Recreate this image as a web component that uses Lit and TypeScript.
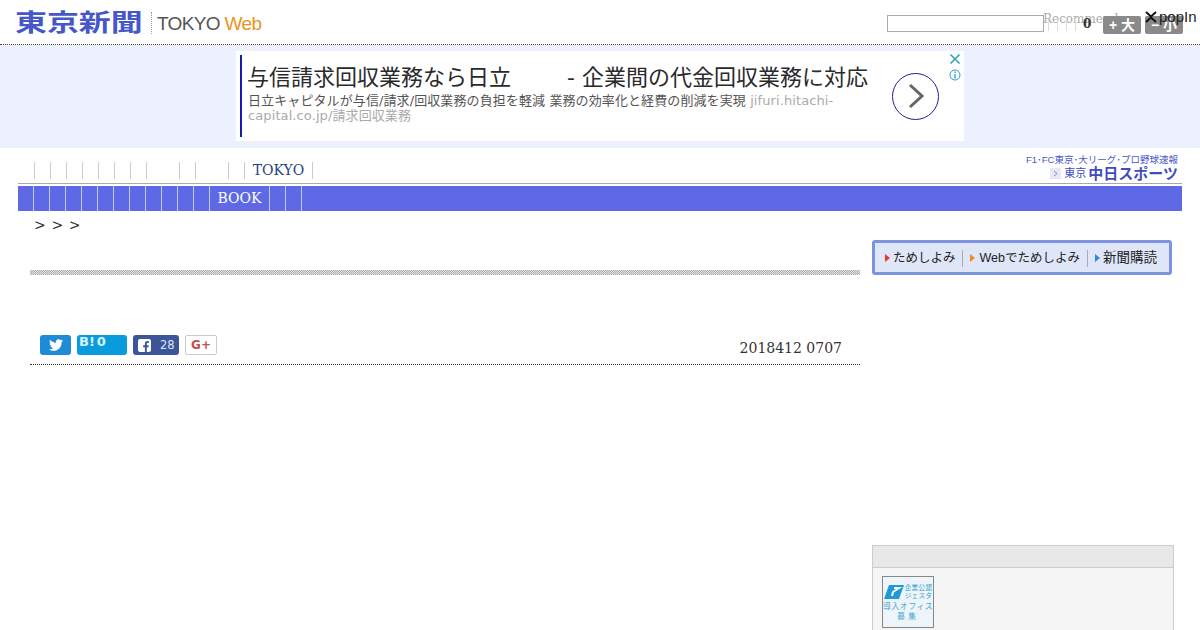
import { LitElement, html, css } from "lit";
import { customElement } from "lit/decorators.js";

@customElement("app-root")
export class AppRoot extends LitElement {
  static styles = css`
    :host { display: block; width: 1200px; height: 630px; overflow: hidden; background: #fff; position: relative; font-family: "DejaVu Serif", "Noto Sans CJK JP", serif; color: #333; }
    * { box-sizing: border-box; }
    .head { height: 45px; border-bottom: 1px dotted #444; display: flex; align-items: flex-start; position: relative; }
    .logo { display: flex; align-items: center; height: 36px; margin: 5px 0 0 15px; font-family: "Liberation Sans", "Noto Sans CJK JP", sans-serif; }
    .logo b { display: block; font-size: 24px; color: #4658c8; line-height: 36px; font-weight: 700; width: 128px; white-space: nowrap; transform: scaleX(1.33); transform-origin: left center; }
    .logo i { display: block; height: 22px; border-left: 1px dotted #99a; margin: 0 5px 0 8px; }
    .logo span { font-size: 19px; letter-spacing: -0.65px; color: #555; margin-top: 1px; }
    .logo em { font-style: normal; color: #e8931c; }
    .search { position: absolute; left: 887px; top: 15px; width: 157px; height: 17px; border: 1px solid #aaa; background: #fff; }
    .rec { position: absolute; left: 1043px; top: 12px; font-size: 12px; color: #aaa; white-space: nowrap; }
    .ticks { position: absolute; left: 1048px; top: 19px; display: flex; gap: 8px; }
    .ticks u { display: block; width: 1px; height: 12px; background: #ddd; }
    .zero { position: absolute; left: 1083px; top: 17px; font-size: 12px; font-weight: 700; color: #333; }
    .size { position: absolute; top: 16px; height: 18px; background: #8a8a8a; color: #fff; border-radius: 2px; font: 700 14px/18px "Liberation Sans", "Noto Sans CJK JP", sans-serif; text-align: center; white-space: nowrap; }
    .big { left: 1103px; width: 38px; }
    .small { left: 1145px; width: 38px; }
    .popln { position: absolute; left: 1144px; top: 8px; display: flex; align-items: center; gap: 1px; font: 15px/17px "Liberation Sans", sans-serif; color: #222; }
    .popln svg { display: block; }

    .band { height: 103px; background: #ecf1fd; padding-top: 6px; display: flex; justify-content: center; }
    .ad { width: 728px; height: 90px; background: #fff; padding: 4px 0 0 4px; display: flex; position: relative; font-family: "DejaVu Sans", "Noto Sans CJK JP", sans-serif; }
    .adbar { width: 2px; height: 82px; background: #1a1ab0; flex: none; }
    .adtext { margin-left: 6px; width: 640px; }
    .adtitle { font-size: 22px; line-height: 26px; margin: 10px 0 0 -1px; color: #2a2a2a; white-space: pre; }
    .addesc { font-size: 13px; line-height: 15px; letter-spacing: 0.1px; color: #555; margin-top: 2px; width: 610px; }
    .addesc span { color: #aaa; }
    .go { position: absolute; left: 656px; top: 22px; }
    .adx { position: absolute; right: 3px; top: 2px; }
    .adi { position: absolute; right: 3px; top: 18px; }

    .nav { height: 36px; margin: 0 18px; border-bottom: 1px solid #aaa; display: flex; align-items: flex-start; padding: 14px 4px 0 16px; }
    .nav a { display: block; height: 17px; border-left: 1px solid #ccc; font-size: 14px; line-height: 16px; color: #1f3f80; text-align: center; }
    .nav a:last-of-type { border-right: 1px solid #ccc; }
    .logo2 { margin-left: auto; margin-top: -9px; text-align: right; font-family: "Liberation Sans", "Noto Sans CJK JP", sans-serif; }
    .logo2 small { display: block; font-size: 9.5px; line-height: 13px; color: #4a57c4; white-space: nowrap; }
    .logo2 b { display: flex; justify-content: flex-end; align-items: center; gap: 2px; font-size: 15px; line-height: 15px; color: #3f4cc0; white-space: nowrap; }
    .logo2 b span { font-size: 11px; font-weight: 400; }
    .logo2 b svg { background: #e4e8f8; margin-right: 1px; }

    .menu { height: 25px; margin: 1px 18px 0; background: #5f69e6; padding-left: 15px; display: flex; margin-top: 2px; }
    .menu a { display: block; height: 25px; border-left: 1px solid #c5c9f2; font-size: 14px; line-height: 24px; color: #fff; text-align: center; }

    .crumbs { height: 28px; padding-left: 34px; display: flex; gap: 5.7px; font-size: 14px; line-height: 28px; color: #333; }
    .main { display: grid; grid-template-columns: 830px 302px; column-gap: 12px; padding-left: 30px; }
    .rule { height: 5px; margin-top: 31px; background: repeating-conic-gradient(#aaa 0 25%, #e6e6e6 0 50%) 0 0 / 2px 2px; }
    .meta { height: 90px; border-bottom: 1px dotted #333; display: flex; align-items: flex-start; padding: 60px 18px 0 10px; }
    .btn { height: 20px; border-radius: 3px; display: flex; align-items: center; color: #fff; margin-right: 6px; font-family: "DejaVu Sans", sans-serif; }
    .tw { width: 31px; background: #1f8ad6; justify-content: center; }
    .hb { width: 50px; background: #0a9bdc; align-items: flex-start; padding-left: 2px; font-size: 13px; line-height: 14px; font-weight: 700; color: #d8f4ff; }
    .hb span { margin-left: 2px; }
    .fb { width: 46px; background: #3b5598; padding-left: 5px; gap: 9px; font-size: 11.5px; color: #dfe5f5; }
    .gp { width: 32px; background: #fff; border: 1px solid #ccc; border-radius: 2px; justify-content: center; color: #c4504a; font-size: 12px; font-weight: 700; }
    .date { margin-left: auto; font-size: 14px; line-height: 16px; margin-top: 5px; color: #333; }

    .side { display: flex; flex-direction: column; }
    .tabs { width: 300px; height: 35px; margin-top: 1px; border: 3px solid #7f94e0; border-radius: 3px; background: #dfe6f8; display: flex; align-items: center; padding: 1px 0 0 10px; font: 12.5px/16px "Liberation Sans", "Noto Sans CJK JP", sans-serif; color: #222; white-space: nowrap; }
    .tabs span { display: flex; align-items: center; gap: 3px; }
    .tabs s { display: block; width: 1px; height: 17px; background: #aab; margin: 0 7px; }
    .tabs s.n { margin-left: 6px; }
    .tabs .o-t { gap: 5px; }
    .tabs .k { font-size: 13.5px; }
    .tri { width: 0; height: 0; border-left: 5px solid #e33; border-top: 4px solid transparent; border-bottom: 4px solid transparent; }
    .tri.o { border-left-color: #ee8a2a; }
    .tri.b { border-left-color: #2a8ae0; }
    .box { margin-top: 270px; height: 100px; border: 1px solid #ccc; background: #f5f5f5; }
    .boxhead { height: 22px; background: #e8e8e8; border-bottom: 1px solid #ccc; }
    .thumb { width: 52px; height: 52px; margin: 8px 0 0 9px; border: 1px solid #888; background: #eef5fa; color: #4aa8d0; font: 8px/10px "Liberation Sans", "Noto Sans CJK JP", sans-serif; letter-spacing: 0.4px; text-align: center; padding-top: 7px; white-space: nowrap; }
    .t1 { display: flex; justify-content: center; align-items: center; gap: 1px; font-size: 6.5px; line-height: 8px; text-align: left; margin-bottom: 2px; color: #2a9fd0; }
    .mj { letter-spacing: 3px; }
  `;

  render() {
    const w1 = [16, 16, 16, 16, 16, 16, 16, 33, 16, 33, 16];
    const w2 = [16, 16, 16, 16, 16, 16, 16, 16, 16, 16, 16];
    return html`
      <div class="head">
        <div class="logo"><b>東京新聞</b><i></i><span>TOKYO <em>Web</em></span></div>
        <div class="search"></div>
        <div class="rec">Recommend</div>
        <div class="ticks">${[0, 1, 2, 3].map(() => html`<u></u>`)}</div>
        <div class="zero">0</div>
        <div class="size big">+ 大</div>
        <div class="size small">− 小</div>
        <div class="popln">
          <svg width="14" height="12" viewBox="0 0 14 12"><path d="M2 1 L7 5.500 L12 1 M2 11 L7 6.500 L12 11" fill="none" stroke="#111" stroke-width="2"/></svg>
          <span>popIn</span>
        </div>
      </div>

      <div class="band">
        <div class="ad">
          <div class="adbar"></div>
          <div class="adtext">
            <div class="adtitle">与信請求回収業務なら日立        - 企業間の代金回収業務に対応</div>
            <div class="addesc">日立キャピタルが与信/請求/回収業務の負担を軽減 業務の効率化と経費の削減を実現 <span>jifuri.hitachi-capital.co.jp/請求回収業務</span></div>
          </div>
          <svg class="go" width="48" height="48" viewBox="0 0 48 48"><circle cx="23.500" cy="23.500" r="23" fill="#fff" stroke="#2a1a90" stroke-width="1"/><path d="M18 12 L30 23 L18 34" fill="none" stroke="#666" stroke-width="3"/></svg>
          <svg class="adx" width="12" height="12" viewBox="0 0 12 12"><path d="M1.500 1.500 L10.500 10.500 M10.500 1.500 L1.500 10.500" stroke="#2aa5c0" stroke-width="1.600"/></svg>
          <svg class="adi" width="12" height="12" viewBox="0 0 12 12"><circle cx="6" cy="6" r="5" fill="none" stroke="#2aa5c0"/><path d="M6 5 V9.500 M6 2.600 V4" stroke="#2aa5c0" stroke-width="1.300"/></svg>
        </div>
      </div>

      <div class="nav">
        ${w1.map((w) => html`<a style="width:${w}px"></a>`)}
        <a style="width:69px">TOKYO</a>
        <div class="logo2">
          <small>F1･FC東京･大リーグ･プロ野球速報</small>
          <b><svg width="11" height="11" viewBox="0 0 11 11"><path d="M4 3 L7 5.500 L4 8" fill="none" stroke="#88a" stroke-width="1"/></svg><span>東京</span>中日スポーツ</b>
        </div>
      </div>

      <div class="menu">
        ${w2.map((w) => html`<a style="width:${w}px"></a>`)}
        <a style="width:60px">BOOK</a>
        <a style="width:16px"></a><a style="width:16px"></a><a style="width:16px"></a>
      </div>

      <div class="crumbs"><span>&gt;</span><span>&gt;</span><span>&gt;</span></div>

      <div class="main">
        <div>
          <div class="rule"></div>
          <div class="meta">
            <div class="btn tw"><svg width="14" height="12" viewBox="0 0 24 20"><path fill="#fff" d="M24 2.400c-.9.400-1.800.700-2.800.800 1-.600 1.800-1.600 2.200-2.700-1 .600-2 1-3.100 1.200C19.300.700 18 0 16.600 0c-2.700 0-4.900 2.200-4.900 4.900 0 .400 0 .800.100 1.100C7.700 5.800 4.100 3.900 1.700.900 1.200 1.600 1 2.500 1 3.400c0 1.700.9 3.200 2.200 4.100-.8 0-1.600-.2-2.200-.6v.1c0 2.400 1.700 4.400 3.900 4.800-.4.100-.8.200-1.300.2-.3 0-.6 0-.9-.1.600 2 2.400 3.400 4.600 3.400-1.700 1.300-3.800 2.100-6.100 2.100-.4 0-.8 0-1.200-.1C2.200 19.300 4.800 20 7.500 20c9.100 0 14-7.500 14-14v-.6c1-.7 1.800-1.600 2.500-2.600z"/></svg></div>
            <div class="btn hb">B!<span>0</span></div>
            <div class="btn fb"><svg width="13" height="13" viewBox="0 0 13 13"><rect width="13" height="13" rx="2" fill="#fff"/><path fill="#3b5598" d="M8.800 13V8.200h1.600l.3-2H8.800V5c0-.6.2-1 1-1h1V2.200c-.2 0-.8-.1-1.400-.1-1.500 0-2.500.9-2.500 2.600v1.500H5.200v2h1.700V13z"/></svg><span>28</span></div>
            <div class="btn gp">G+</div>
            <div class="date">2018412 0707</div>
          </div>
        </div>
        <div class="side">
          <div class="tabs">
            <span><i class="tri"></i>ためしよみ</span><s class="n"></s>
            <span class="o-t"><i class="tri o"></i>Webでためしよみ</span><s></s>
            <span class="k"><i class="tri b"></i>新聞購読</span>
          </div>
          <div class="box">
            <div class="boxhead"></div>
            <div class="thumb">
              <div class="t1"><svg width="20" height="14" viewBox="0 0 20 14"><path fill="#1f9ad6" d="M5 0H20L15 14H0Z"/><path d="M10 3H15L9 7 8 11" fill="none" stroke="#fff" stroke-width="2"/></svg><span>企業公認<br/>ジェスタ</span></div>
              導入オフィス<br/><span class="mj">募集</span>
            </div>
          </div>
        </div>
      </div>
    `;
  }
}
